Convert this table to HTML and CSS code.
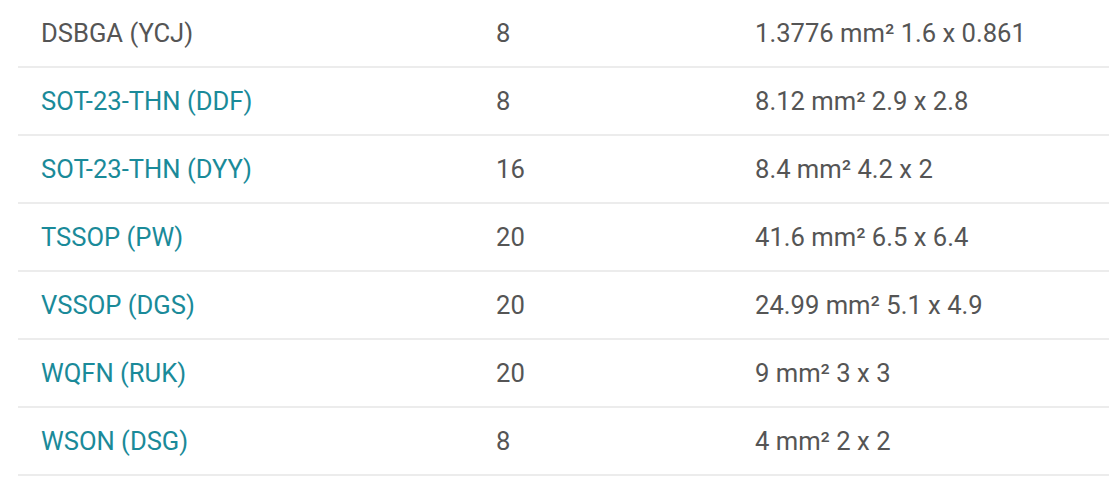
FILE: index.html
```html
<!DOCTYPE html>
<html lang="en">
<head>
<meta charset="utf-8">
<title>Packages</title>
<link rel="stylesheet" href="styles.css">
</head>
<body>
<div class="page">
  <div class="table">
    <div class="row">
      <div class="cell name">DSBGA (YCJ)</div>
      <div class="cell">8</div>
      <div class="cell">1.3776 mm² 1.6 x 0.861</div>
    </div>
    <div class="row">
      <div class="cell name"><a class="link" href="#">SOT-23-THN (DDF)</a></div>
      <div class="cell">8</div>
      <div class="cell">8.12 mm² 2.9 x 2.8</div>
    </div>
    <div class="row">
      <div class="cell name"><a class="link" href="#">SOT-23-THN (DYY)</a></div>
      <div class="cell">16</div>
      <div class="cell">8.4 mm² 4.2 x 2</div>
    </div>
    <div class="row">
      <div class="cell name"><a class="link" href="#">TSSOP (PW)</a></div>
      <div class="cell">20</div>
      <div class="cell">41.6 mm² 6.5 x 6.4</div>
    </div>
    <div class="row">
      <div class="cell name"><a class="link" href="#">VSSOP (DGS)</a></div>
      <div class="cell">20</div>
      <div class="cell">24.99 mm² 5.1 x 4.9</div>
    </div>
    <div class="row">
      <div class="cell name"><a class="link" href="#">WQFN (RUK)</a></div>
      <div class="cell">20</div>
      <div class="cell">9 mm² 3 x 3</div>
    </div>
    <div class="row">
      <div class="cell name"><a class="link" href="#">WSON (DSG)</a></div>
      <div class="cell">8</div>
      <div class="cell">4 mm² 2 x 2</div>
    </div>
  </div>
</div>
</body>
</html>
```
FILE: styles.css
```css
html, body {
  margin: 0;
  padding: 0;
  background: #ffffff;
}

.page {
  padding-left: 18px;
}

.table {
  display: flex;
  flex-direction: column;
  font-family: Roboto, "Liberation Sans", sans-serif;
  font-size: 25.6px;
  color: #555555;
}

.row {
  display: grid;
  grid-template-columns: 455px 259px 1fr;
  height: 66px;
  align-items: center;
  border-bottom: 2px solid #ececec;
}

.cell {
  padding-left: 23px;
  line-height: normal;
  white-space: nowrap;
}

.link {
  color: #1a8a99;
  text-decoration: none;
}
```
